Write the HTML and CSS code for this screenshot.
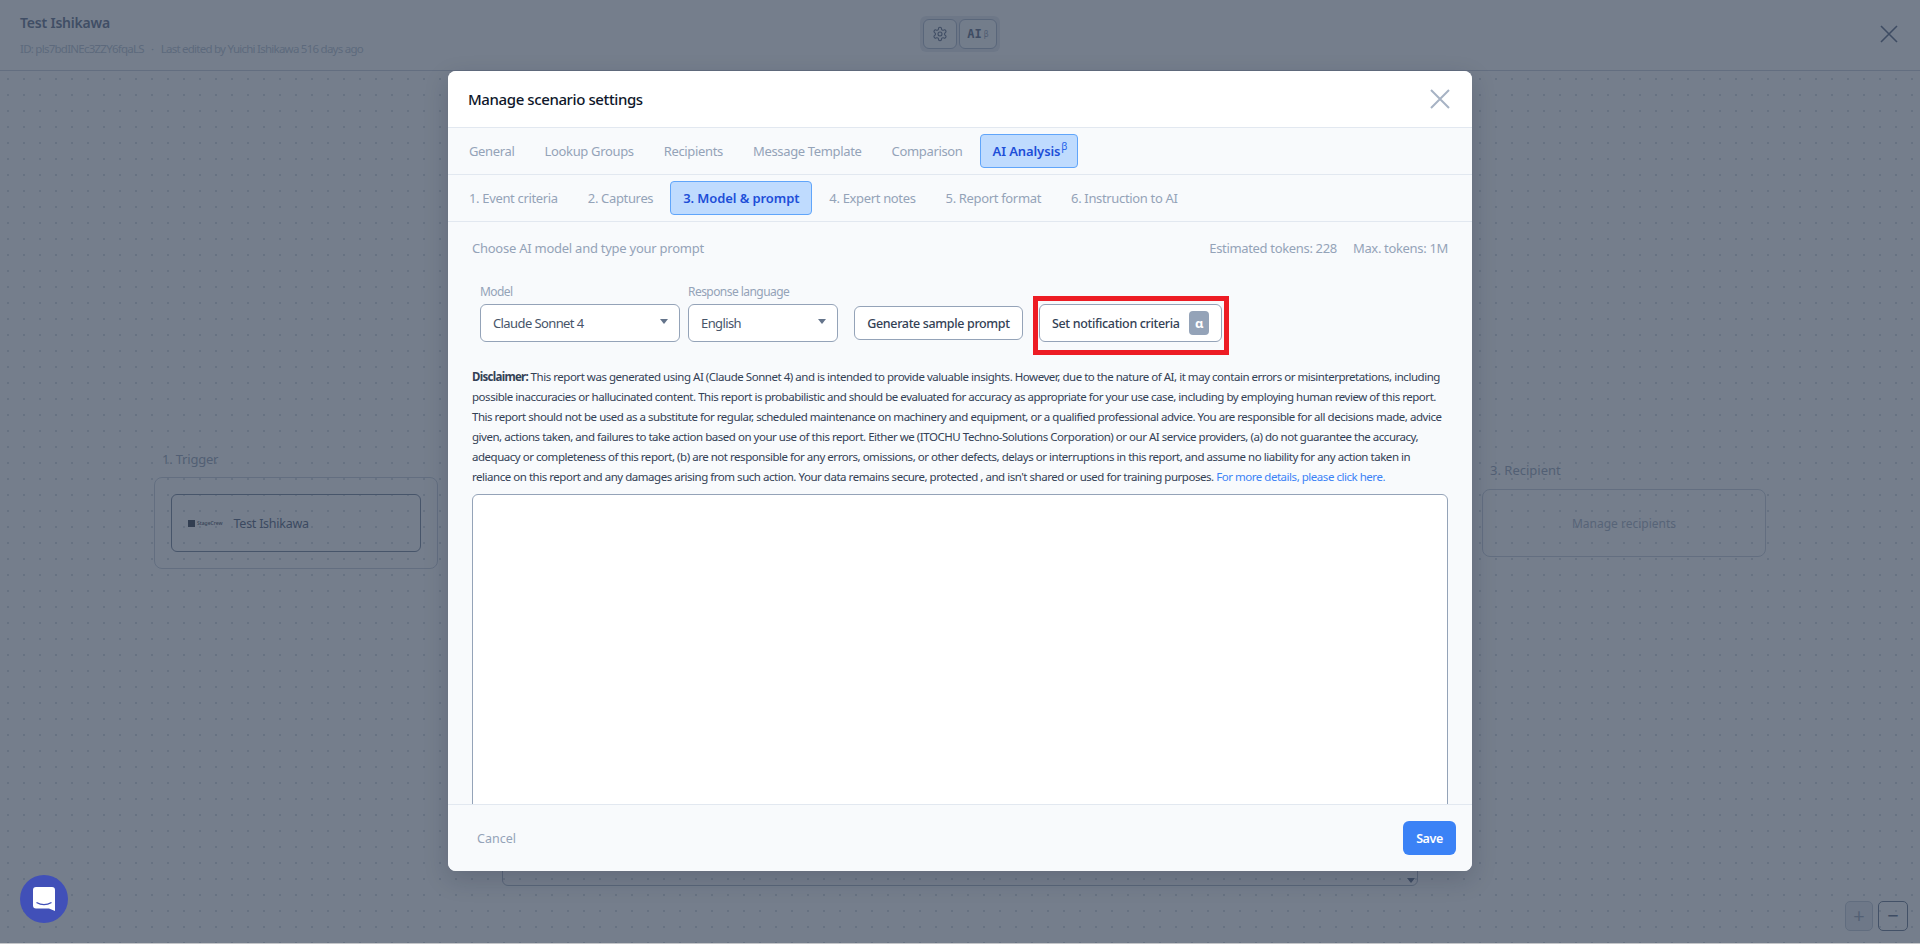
FILE: index.html
```html
<!DOCTYPE html>
<html lang="en">
<head>
    <meta charset="UTF-8">
    <title>Manage scenario settings</title>
    <link rel="stylesheet" href="styles.css">
</head>
<body>

    <div class="app">
        <!-- Top bar behind the modal -->
        <header class="topbar">
            <div class="topbar-info">
                <div class="scenario-name">Test Ishikawa</div>
                <div class="scenario-meta">ID: pls7bdINEc3ZZY6fqaLS <span class="meta-dot">&middot;</span> Last edited by Yuichi Ishikawa 516 days ago</div>
            </div>
            <div class="topbar-tools">
                <button class="tool-btn tool-gear" type="button">
                    <svg width="16" height="16" viewBox="0 0 24 24" fill="none" stroke="currentColor" stroke-width="1.6" stroke-linecap="round" stroke-linejoin="round">
                        <path d="M12.220 2h-.44a2 2 0 0 0-2 2v.18a2 2 0 0 1-1 1.730l-.43.25a2 2 0 0 1-2 0l-.15-.08a2 2 0 0 0-2.730.73l-.22.38a2 2 0 0 0 .73 2.730l.15.1a2 2 0 0 1 1 1.720v.51a2 2 0 0 1-1 1.740l-.15.09a2 2 0 0 0-.73 2.730l.22.38a2 2 0 0 0 2.730.73l.15-.08a2 2 0 0 1 2 0l.43.25a2 2 0 0 1 1 1.730V20a2 2 0 0 0 2 2h.44a2 2 0 0 0 2-2v-.18a2 2 0 0 1 1-1.730l.43-.25a2 2 0 0 1 2 0l.15.08a2 2 0 0 0 2.730-.73l.22-.39a2 2 0 0 0-.73-2.730l-.15-.08a2 2 0 0 1-1-1.740v-.5a2 2 0 0 1 1-1.740l.15-.09a2 2 0 0 0 .73-2.730l-.22-.38a2 2 0 0 0-2.730-.73l-.15.08a2 2 0 0 1-2 0l-.43-.25a2 2 0 0 1-1-1.730V4a2 2 0 0 0-2-2z"></path>
                        <circle cx="12" cy="12" r="3"></circle>
                    </svg>
                </button>
                <button class="tool-btn tool-ai" type="button">AI<sup>&beta;</sup></button>
            </div>
            <svg class="topbar-close" width="18" height="18" viewBox="0 0 18 18" fill="none" stroke="currentColor" stroke-width="1.6"><path d="M1 1l16 16M17 1L1 17"></path></svg>
        </header>

        <!-- Scenario canvas behind the modal -->
        <main class="canvas">
            <div class="node-label trigger-label">1. Trigger</div>
            <div class="node trigger-node">
                <div class="trigger-inner">
                    <span class="logo"><span class="logo-mark"></span><span class="logo-text">StageCrew</span></span>
                    <span>Test Ishikawa</span>
                </div>
            </div>
            <div class="node-label recipient-label">3. Recipient</div>
            <div class="node recipient-node">Manage recipients</div>
            <div class="node hidden-select"><span class="select-caret"></span></div>

            <div class="zoom-controls">
                <button class="zoom-btn zoom-off" type="button">+</button>
                <button class="zoom-btn" type="button">&minus;</button>
            </div>
        </main>

        <div class="overlay">
            <section class="modal">
                <div class="modal-header">
                    <h2 class="modal-title">Manage scenario settings</h2>
                    <svg class="modal-close" width="20" height="20" viewBox="0 0 20 20" fill="none" stroke="currentColor" stroke-width="2"><path d="M1 1l18 18M19 1L1 19"></path></svg>
                </div>

                <nav class="tab-row">
                    <a class="tab">General</a>
                    <a class="tab">Lookup Groups</a>
                    <a class="tab">Recipients</a>
                    <a class="tab">Message Template</a>
                    <a class="tab">Comparison</a>
                    <a class="tab active">AI Analysis<sup>&beta;</sup></a>
                </nav>

                <nav class="tab-row">
                    <a class="tab">1. Event criteria</a>
                    <a class="tab">2. Captures</a>
                    <a class="tab active">3. Model &amp; prompt</a>
                    <a class="tab">4. Expert notes</a>
                    <a class="tab">5. Report format</a>
                    <a class="tab">6. Instruction to AI</a>
                </nav>

                <div class="modal-body">
                    <div class="info-row">
                        <span>Choose AI model and type your prompt</span>
                        <span class="token-info"><span>Estimated tokens: 228</span><span>Max. tokens: 1M</span></span>
                    </div>

                    <div class="controls">
                        <div class="field field-model">
                            <label class="field-label">Model</label>
                            <div class="select-box">Claude Sonnet 4<span class="select-caret"></span></div>
                        </div>
                        <div class="field field-lang">
                            <label class="field-label">Response language</label>
                            <div class="select-box">English<span class="select-caret"></span></div>
                        </div>
                        <button class="action-btn sample-btn" type="button">Generate sample prompt</button>
                        <button class="action-btn criteria-btn" type="button">
                            Set notification criteria
                            <span class="alpha-badge">&alpha;</span>
                            <span class="callout"></span>
                        </button>
                    </div>

                    <p class="disclaimer"><strong>Disclaimer:</strong> This report was generated using AI (Claude Sonnet 4) and is intended to provide valuable insights. However, due to the nature of AI, it may contain errors or misinterpretations, including possible inaccuracies or hallucinated content. This report is probabilistic and should be evaluated for accuracy as appropriate for your use case, including by employing human review of this report. This report should not be used as a substitute for regular, scheduled maintenance on machinery and equipment, or a qualified professional advice. You are responsible for all decisions made, advice given, actions taken, and failures to take action based on your use of this report. Either we (ITOCHU Techno-Solutions Corporation) or our AI service providers, (a) do not guarantee the accuracy, adequacy or completeness of this report, (b) are not responsible for any errors, omissions, or other defects, delays or interruptions in this report, and assume no liability for any action taken in reliance on this report and any damages arising from such action. Your data remains secure, protected , and isn't shared or used for training purposes. <a class="more-link">For more details, please click here.</a></p>

                    <div class="prompt-box"></div>
                </div>

                <div class="modal-footer">
                    <button class="cancel-btn" type="button">Cancel</button>
                    <button class="save-btn" type="button">Save</button>
                </div>
            </section>

            <!-- Chat launcher -->
            <button class="chat-btn" type="button">
                <svg width="22" height="24" viewBox="0 0 22 24">
                    <path d="M3 0h16a3 3 0 0 1 3 3v21l-6-2.500H3a3 3 0 0 1-3-3V3a3 3 0 0 1 3-3z" fill="#fff"></path>
                    <path d="M3.500 15.500c4.500 2.600 10.500 2.600 15 0" fill="none" stroke="#4150b8" stroke-width="1.400"></path>
                </svg>
            </button>
        </div>
    </div>

</body>
</html>
```

FILE: styles.css
```css
/* General Styles */
html {
    background-color: #c4c6c9;
}

body {
    margin: 0;
    font-family: 'Noto Sans', sans-serif;
    overflow: hidden;
}

button {
    font-family: inherit;
    cursor: pointer;
}

.app {
    position: relative;
    display: flex;
    flex-direction: column;
    height: 943px;
    background-color: #ffffff;
    overflow: hidden;
}

/* Top Bar */
.topbar {
    display: flex;
    align-items: center;
    justify-content: space-between;
    height: 70px;
    padding: 0 22px 0 20px;
    border-bottom: 1px solid #c8ced8;
    flex-shrink: 0;
}

.topbar-info {
    width: 700px;
}

.scenario-name {
    font-size: 14px;
    font-weight: 600;
    line-height: 20px;
    margin-top: -1px;
    letter-spacing: -0.2px;
    color: #5b6a85;
}

.scenario-meta {
    font-size: 11.500px;
    line-height: 16px;
    margin-top: 8px;
    letter-spacing: -0.75px;
    color: #b4bfce;
}

.meta-dot {
    margin: 0 5px;
}

.topbar-tools {
    display: flex;
    gap: 2px;
    position: absolute;
    left: 920px;
    top: 16px;
    padding: 3px;
    border-radius: 6px;
    background-color: #e6eaf0;
}

.tool-btn {
    display: flex;
    align-items: center;
    justify-content: center;
    height: 30px;
    padding: 0;
    border: 1px solid #a9b5c8;
    border-radius: 6px;
    background-color: #f8fafc;
    color: #55647f;
}

.tool-gear {
    width: 34px;
}

.tool-ai {
    width: 38px;
    font-family: 'DejaVu Sans Mono', monospace;
    font-size: 12px;
    font-weight: 600;
}

.tool-ai sup {
    font-size: 8px;
    font-weight: 400;
    margin-left: 2px;
    color: #8c99ad;
}

.topbar-close {
    color: #55647f;
    margin-top: -2px;
}

/* Canvas */
.canvas {
    position: relative;
    flex: 1;
    background-color: #ffffff;
    background-image: radial-gradient(circle at center, #d3d8e0 0.8px, transparent 1.1px);
    background-size: 16px 16px;
}

.node-label {
    position: absolute;
    font-size: 13px;
    line-height: 18px;
    color: #93a0b3;
}

.node {
    position: absolute;
    box-sizing: border-box;
    border: 1px solid #c6ceda;
    border-radius: 8px;
}

.trigger-label {
    left: 162px;
    top: 379px;
    letter-spacing: -0.2px;
}

.trigger-node {
    left: 154px;
    top: 406px;
    width: 284px;
    height: 92px;
    padding: 16px;
}

.trigger-inner {
    display: flex;
    align-items: center;
    gap: 11px;
    height: 58px;
    padding: 0 16px;
    box-sizing: border-box;
    border: 1px solid #717f96;
    border-radius: 6px;
    font-size: 12.500px;
    letter-spacing: -0.25px;
    color: #4d5c78;
}

.logo {
    display: flex;
    align-items: center;
    gap: 2px;
}

.logo-mark {
    width: 7px;
    height: 7px;
    background-color: #2f3a4a;
}

.logo-text {
    font-size: 5px;
    font-weight: 500;
    letter-spacing: 0;
    color: #3a4556;
}

.recipient-label {
    left: 1490px;
    top: 390px;
}

.recipient-node {
    left: 1482px;
    top: 418px;
    width: 284px;
    height: 68px;
    display: flex;
    align-items: center;
    justify-content: center;
    font-size: 12px;
    color: #a3aebf;
}

.hidden-select {
    left: 502px;
    top: 700px;
    width: 916px;
    height: 115px;
    border-color: #aab4c4;
    border-radius: 6px;
}

.hidden-select .select-caret {
    right: 2px;
    top: 106px;
    border-top-color: #55647f;
}

.zoom-controls {
    position: absolute;
    right: 12px;
    bottom: 12px;
    display: flex;
    gap: 5px;
}

.zoom-btn {
    width: 30px;
    height: 30px;
    padding: 0;
    border: 1px solid #64748b;
    border-radius: 5px;
    background-color: transparent;
    font-size: 20px;
    line-height: 1;
    color: #55647f;
}

.zoom-off {
    width: 28px;
    border-color: #c2cad6;
    background-color: #e8ecf1;
    color: #97a3b5;
}

/* Overlay and Modal */
.overlay {
    position: absolute;
    inset: 0;
    background-color: rgba(51, 65, 85, 0.68);
    display: flex;
    align-items: center;
    justify-content: center;
}

.modal {
    display: flex;
    flex-direction: column;
    width: 1024px;
    height: 800px;
    margin-top: -1px;
    border-radius: 8px;
    background-color: #f8fafc;
    box-shadow: 0 8px 24px rgba(15, 23, 42, 0.18);
    overflow: hidden;
}

.modal-header {
    display: flex;
    align-items: center;
    justify-content: space-between;
    height: 56px;
    padding: 0 22px 0 20px;
    background-color: #ffffff;
    border-bottom: 1px solid #e2e8f0;
    flex-shrink: 0;
}

.modal-title {
    margin: 0;
    font-size: 15px;
    font-weight: 500;
    letter-spacing: -0.4px;
    color: #0f172a;
}

.modal-close {
    color: #a7b3c4;
}

.tab-row {
    display: flex;
    align-items: center;
    gap: 4px;
    height: 46px;
    padding: 0 8px;
    border-bottom: 1px solid #e2e8f0;
    flex-shrink: 0;
}

.tab {
    display: flex;
    align-items: center;
    box-sizing: border-box;
    height: 34px;
    padding: 0 12px;
    border: 1px solid transparent;
    border-radius: 4px;
    font-size: 13px;
    letter-spacing: -0.34px;
    color: #94a3b8;
}

.tab.active {
    background-color: #bfdbfe;
    border-color: #60a5fa;
    font-weight: 600;
    letter-spacing: -0.1px;
    color: #1d4ed8;
}

.tab sup {
    align-self: flex-start;
    margin: 6px -2px 0 1px;
    font-size: 10px;
    font-weight: 400;
    line-height: 1;
    color: #2563eb;
}

/* Modal Body */
.modal-body {
    flex: 1;
    padding: 16px 24px 0;
    overflow: hidden;
}

.info-row {
    display: flex;
    justify-content: space-between;
    line-height: 20px;
    font-size: 13px;
    letter-spacing: -0.25px;
    color: #94a3b8;
}

.token-info {
    display: flex;
    gap: 16px;
    letter-spacing: -0.33px;
}

.controls {
    display: flex;
    align-items: flex-end;
    margin: 26px 0 0 8px;
}

.field-model {
    width: 200px;
    margin-right: 8px;
}

.field-lang {
    width: 150px;
    margin-right: 16px;
}

.field-label {
    display: block;
    font-size: 12px;
    line-height: 16px;
    margin-bottom: 4px;
    letter-spacing: -0.55px;
    color: #94a3b8;
}

.select-box {
    position: relative;
    box-sizing: border-box;
    display: flex;
    align-items: center;
    height: 38px;
    padding: 0 12px;
    border: 1px solid #94a3b8;
    border-radius: 6px;
    background-color: #ffffff;
    font-size: 13px;
    letter-spacing: -0.6px;
    color: #475569;
}

.select-caret {
    position: absolute;
    right: 11px;
    top: 14px;
    width: 0;
    height: 0;
    border-left: 4.500px solid transparent;
    border-right: 4.500px solid transparent;
    border-top: 5px solid #64748b;
}

.action-btn {
    position: relative;
    display: flex;
    align-items: center;
    box-sizing: border-box;
    border: 1px solid #94a3b8;
    border-radius: 6px;
    background-color: #ffffff;
    font-size: 12.500px;
    font-weight: 500;
    letter-spacing: -0.35px;
    white-space: nowrap;
    color: #334155;
}

.sample-btn {
    width: 169px;
    height: 34px;
    justify-content: center;
    padding: 0;
    margin: 0 16px 2px 0;
}

.criteria-btn {
    width: 183px;
    height: 38px;
    padding: 0 12px;
    justify-content: space-between;
}

.alpha-badge {
    display: flex;
    align-items: center;
    justify-content: center;
    width: 20px;
    height: 24px;
    border-radius: 4px;
    background-color: #94a3b8;
    font-size: 13px;
    font-weight: 700;
    color: #ffffff;
}

/* Red annotation box around the button */
.callout {
    position: absolute;
    top: -9px;
    left: -7px;
    right: -8px;
    bottom: -14px;
    border: 5px solid #ed1c24;
    pointer-events: none;
}

.disclaimer {
    margin: 25px 0 0;
    font-size: 11.500px;
    line-height: 20px;
    letter-spacing: -0.47px;
    color: #334155;
}

.disclaimer strong {
    font-weight: 700;
    letter-spacing: -0.7px;
}

.more-link {
    color: #3b82f6;
}

.prompt-box {
    height: 340px;
    margin-top: 7px;
    border: 1px solid #94a3b8;
    border-radius: 6px;
    background-color: #ffffff;
}

/* Modal Footer */
.modal-footer {
    display: flex;
    align-items: center;
    justify-content: space-between;
    height: 66px;
    padding: 0 16px 0 19px;
    border-top: 1px solid #e2e8f0;
    background-color: #f8fafc;
    flex-shrink: 0;
}

.cancel-btn {
    padding: 0 10px;
    border: none;
    background: none;
    font-size: 12.500px;
    color: #94a3b8;
}

.save-btn {
    width: 53px;
    height: 34px;
    padding: 0;
    border: none;
    border-radius: 6px;
    background-color: #3b82f6;
    font-size: 12.500px;
    font-weight: 600;
    letter-spacing: -0.4px;
    color: #ffffff;
}

/* Chat Launcher */
.chat-btn {
    position: absolute;
    left: 20px;
    top: 875px;
    display: flex;
    align-items: center;
    justify-content: center;
    width: 48px;
    height: 48px;
    padding: 0;
    border: none;
    border-radius: 50%;
    background-color: #4150b8;
}
```
